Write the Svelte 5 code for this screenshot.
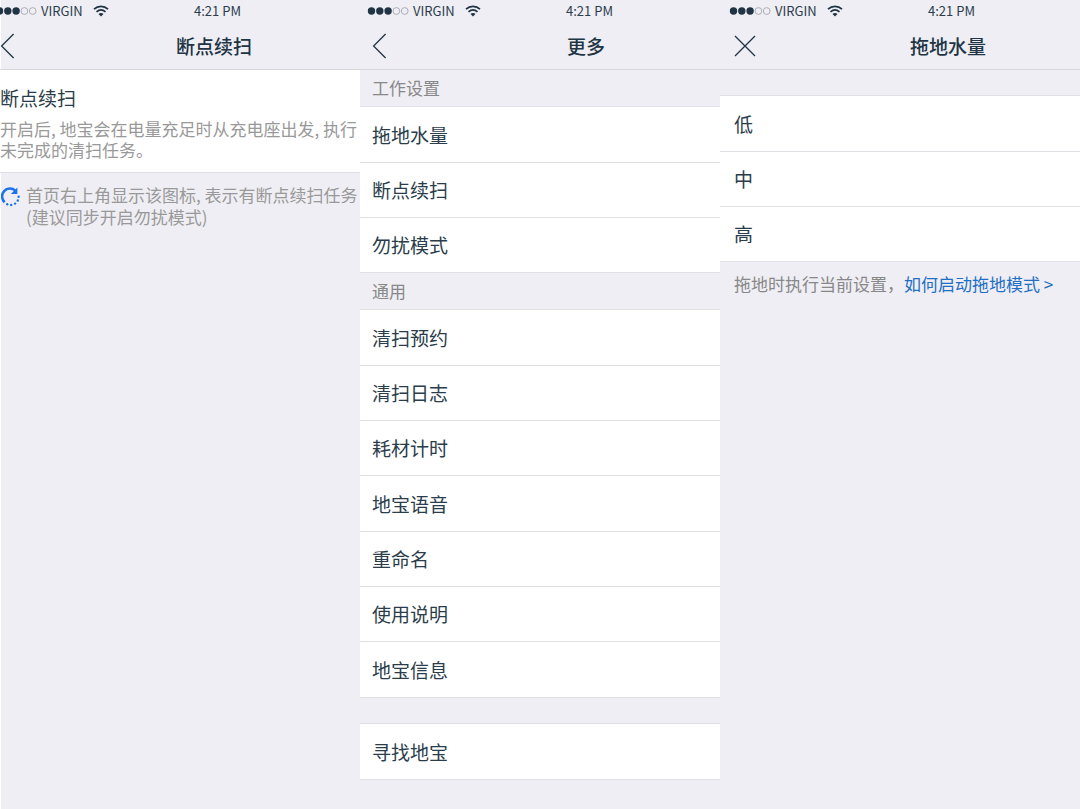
<script>
  const workSettings = ['拖地水量', '断点续扫', '勿扰模式'];
  const general = ['清扫预约', '清扫日志', '耗材计时', '地宝语音', '重命名', '使用说明', '地宝信息'];
  const levels = ['低', '中', '高'];
</script>

{#snippet header(title, close)}
  <header>
    <div class="status">
      <svg class="signal" viewBox="0 0 42 10" aria-hidden="true">
        <circle cx="4.5" cy="5" r="3.7" />
        <circle cx="12.8" cy="5" r="3.7" />
        <circle cx="21.1" cy="5" r="3.7" />
        <circle class="empty" cx="29.4" cy="5" r="3.4" />
        <circle class="empty" cx="37.7" cy="5" r="3.4" />
      </svg>
      <span class="carrier">VIRGIN</span>
      <svg class="wifi" viewBox="0 0 16 12" aria-hidden="true">
        <path d="M1 4.2C5 .4 11 .4 15 4.2M3.5 6.9c2.7-2.3 6.3-2.3 9 0" />
        <path class="core" d="M5.5 9c1.5-1.3 3.5-1.3 5 0L8 11.4z" />
      </svg>
      <time>4:21 PM</time>
    </div>
    <div class="bar">
      {#if close}
        <button class="nav" aria-label="关闭">
          <svg viewBox="0 0 24 26"><path d="M2 3l20 20M22 3L2 23" /></svg>
        </button>
      {:else}
        <button class="nav" aria-label="返回">
          <svg viewBox="0 0 24 26"><path d="M14.6 1L2.6 13l12 12" /></svg>
        </button>
      {/if}
      <h1>{title}</h1>
    </div>
  </header>
{/snippet}

{#snippet rows(items)}
  <ul>
    {#each items as item}
      <li><button class="row">{item}</button></li>
    {/each}
  </ul>
{/snippet}

<main>
  <section class="screen resume">
    {@render header('断点续扫', false)}
    <div class="card">
      <h2>断点续扫</h2>
      <p>开启后, 地宝会在电量充足时从充电座出发, 执行未完成的清扫任务。</p>
    </div>
    <div class="hint">
      <svg class="spin" viewBox="0 0 20 20" aria-hidden="true">
        <path class="arc" d="M3.6 15.2A7.6 7.6 0 0 1 14.3 3.6" />
        <path class="tip" d="M16.4.6v6.5H9.9z" />
        <circle cx="17.6" cy="9.8" r="1.2" />
        <circle cx="16.8" cy="13.5" r="1.2" />
        <circle cx="14.1" cy="16.6" r="1.2" />
        <circle cx="10.2" cy="18" r="1.2" />
        <circle cx="6.2" cy="17.3" r="1.2" />
      </svg>
      <p>首页右上角显示该图标, 表示有断点续扫任务<br />(建议同步开启勿扰模式)</p>
    </div>
  </section>

  <section class="screen more">
    {@render header('更多', false)}
    <h2 class="label">工作设置</h2>
    {@render rows(workSettings)}
    <h2 class="label">通用</h2>
    {@render rows(general)}
    <div class="gap"></div>
    {@render rows(['寻找地宝'])}
  </section>

  <section class="screen water">
    {@render header('拖地水量', true)}
    <div class="gap"></div>
    {@render rows(levels)}
    <p class="note">拖地时执行当前设置，<a href="#mop">如何启动拖地模式 &gt;</a></p>
  </section>
</main>

<style>
  :global(body) {
    margin: 0;
    background: #efeef4;
  }
  main {
    display: grid;
    grid-template-columns: repeat(3, minmax(0, 1fr));
    min-height: 100vh;
    font-family: 'Noto Sans CJK SC', sans-serif;
    font-size: 17px;
    color: #2b3d4b;
  }
  .screen {
    --shift: 0px;
    overflow: hidden;
    background: #efeef4;
  }
  .resume {
    --shift: -12px;
    box-shadow: inset 1px 0 #fff;
  }
  .water {
    --shift: 2px;
  }
  h1, h2, p, ul {
    margin: 0;
    padding: 0;
    font-weight: 400;
  }
  ul {
    list-style: none;
    border-top: 1px solid #dfdfe4;
  }
  button {
    margin: 0;
    padding: 0;
    border: 0;
    background: none;
    font: inherit;
    color: inherit;
    cursor: pointer;
  }
  header {
    border-bottom: 1px solid #d6d6dc;
  }
  .status, .bar {
    display: grid;
    align-items: center;
    width: 125%;
    margin-left: var(--shift);
    box-sizing: border-box;
  }
  .status {
    grid-template-columns: 42px 48px 16px 1fr;
    column-gap: 4px;
    height: 22px;
    padding-left: 7px;
    font-size: 13px;
    line-height: 22px;
  }
  .status > * {
    grid-row: 1;
  }
  time {
    grid-column: 1 / -1;
    padding-left: 2px;
    text-align: center;
  }
  .signal {
    grid-column: 1;
    width: 42px;
    height: 10px;
    fill: #203443;
  }
  .empty {
    fill: none;
    stroke: #9aa0a8;
    stroke-width: 0.8;
  }
  .carrier {
    grid-column: 2;
  }
  .wifi {
    grid-column: 3;
    width: 16px;
    height: 12px;
    fill: none;
    stroke: #203443;
    stroke-width: 1.7;
  }
  .core {
    fill: #203443;
    stroke: none;
  }
  .bar {
    height: 47px;
  }
  .bar > * {
    grid-area: 1 / 1;
  }
  .nav {
    justify-self: start;
    z-index: 1;
    margin-left: 11px;
  }
  .nav svg {
    display: block;
    width: 24px;
    height: 26px;
    fill: none;
    stroke: #203443;
    stroke-width: 1.3;
  }
  h1 {
    padding-left: 2px;
    font-size: 19px;
    font-weight: 500;
    line-height: 46px;
    text-align: center;
    color: #203443;
  }
  .card {
    padding: 14px 0 12px calc(12px + var(--shift));
    background: #fff;
    border-bottom: 1px solid #dfdfe4;
  }
  .card h2 {
    padding-bottom: 6px;
    font-size: 19px;
    line-height: 28px;
  }
  .card p {
    line-height: 21px;
    color: #999;
  }
  .hint {
    display: flex;
    gap: 5px;
    padding: 11px 0 0 1px;
    line-height: 22px;
    color: #999;
  }
  .spin {
    flex: none;
    width: 20px;
    height: 20px;
    margin-top: 3px;
    fill: #1b74ee;
  }
  .arc {
    fill: none;
    stroke: #1b74ee;
    stroke-width: 2.6;
  }
  .hint p {
    white-space: nowrap;
  }
  .label {
    padding-left: calc(12px + var(--shift));
    font-size: 17px;
    line-height: 36px;
    color: #888;
  }
  .row {
    display: block;
    width: 100%;
    padding-left: calc(12px + var(--shift));
    border-bottom: 1px solid #dfdfe4;
    background: #fff;
    font-size: 19px;
    line-height: 54px;
    text-align: left;
  }
  li:nth-child(3n + 1) .row {
    line-height: 55px;
  }
  .gap {
    height: 25px;
  }
  .note {
    padding: 9px 0 0 calc(12px + var(--shift));
    line-height: 25px;
    color: #888;
    white-space: nowrap;
  }
  a {
    color: #1f6fc4;
    text-decoration: none;
  }
</style>
